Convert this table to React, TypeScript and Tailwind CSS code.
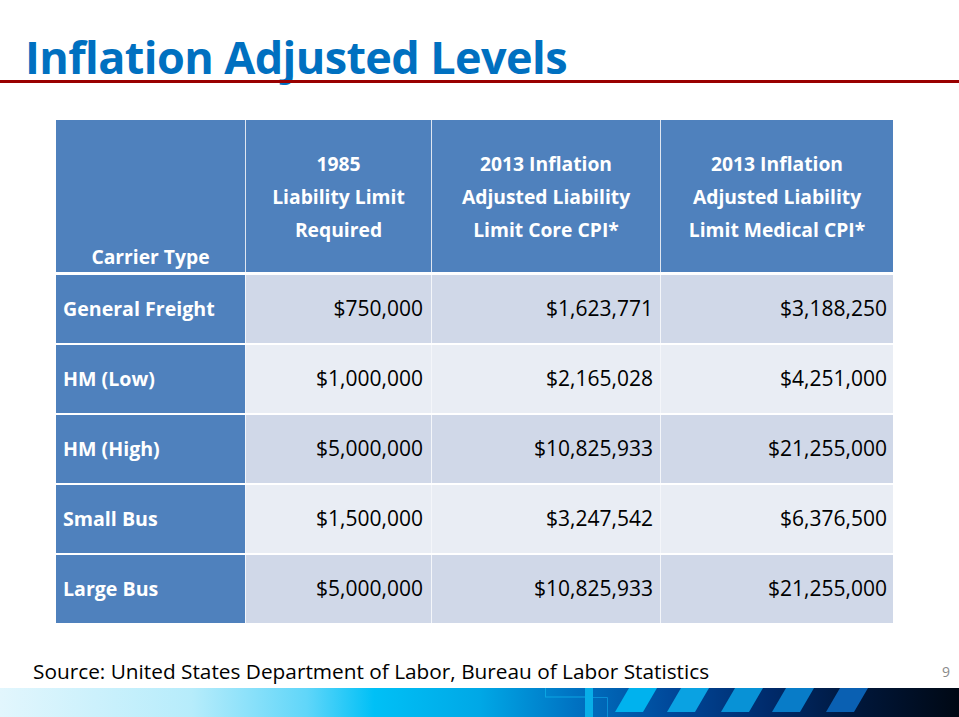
const rows = [
  { type: "General Freight", y1985: "$750,000", core: "$1,623,771", medical: "$3,188,250" },
  { type: "HM (Low)", y1985: "$1,000,000", core: "$2,165,028", medical: "$4,251,000" },
  { type: "HM (High)", y1985: "$5,000,000", core: "$10,825,933", medical: "$21,255,000" },
  { type: "Small Bus", y1985: "$1,500,000", core: "$3,247,542", medical: "$6,376,500" },
  { type: "Large Bus", y1985: "$5,000,000", core: "$10,825,933", medical: "$21,255,000" },
];

// slanted stripes on the footer band: bottom-left x of each
const stripes = [
  { x: 615, fill: "#00b2ee" },
  { x: 667, fill: "#0aa2e2" },
  { x: 721, fill: "#0892d6" },
  { x: 772, fill: "#087cc8" },
  { x: 826, fill: "#0a60b2" },
];

function FooterBand() {
  return (
    <div className="relative h-[29px] w-full bg-[linear-gradient(90deg,#e2f6fd_0%,#b6ecfb_20%,#60d6f9_32%,#00c0f6_39%,#00a8e6_50%,#0072c2_60%,#00489a_70%,#002b6c_80%,#001638_90%,#000814_100%)]">
      <svg className="absolute inset-0" width="959" height="29" viewBox="0 0 959 29">
        <rect x="545.5" y="-1" width="40" height="10" fill="none" stroke="#0aa6e2" strokeWidth="1" />
        <rect x="585" y="0" width="8" height="29" fill="#08aee8" />
        <polyline points="593,9.5 607.5,9.5 607.5,29" fill="none" stroke="#0a8fd6" strokeWidth="1" />
        {stripes.map((s) => (
          <polygon
            key={s.x}
            points={`${s.x},24 ${s.x + 28},24 ${s.x + 42},0 ${s.x + 14},0`}
            fill={s.fill}
          />
        ))}
      </svg>
    </div>
  );
}

export default function App() {
  return (
    <div
      className="w-[959px] h-[717px] bg-white flex flex-col overflow-hidden"
      style={{ fontFamily: '"Open Sans", "Noto Sans", sans-serif' }}
    >
      <h1 className="mt-[34px] pl-[25px] text-[45px] leading-[46px] font-bold text-[#0070c0] tracking-[-0.6px] whitespace-nowrap">
        Inflation Adjusted Levels
      </h1>
      <div className="h-[3px] w-full bg-[#990000]" />

      <div className="mt-[37px] ml-[56px] w-[837px]">
        <div className="grid grid-cols-[189px_185px_228px_232px] gap-x-[1px] bg-[#dfe6f1] h-[152px] text-white font-bold text-[19.3px]">
          <div className="bg-[#4f81bd] flex items-end justify-center pb-[2px] leading-[26px]">
            Carrier Type
          </div>
          <div className="bg-[#4f81bd] flex items-center justify-center text-center leading-[33px]">
            <span>
              1985
              <br />
              Liability Limit
              <br />
              Required
            </span>
          </div>
          <div className="bg-[#4f81bd] flex items-center justify-center text-center leading-[33px]">
            <span>
              2013 Inflation
              <br />
              Adjusted Liability
              <br />
              Limit Core CPI*
            </span>
          </div>
          <div className="bg-[#4f81bd] flex items-center justify-center text-center leading-[33px]">
            <span>
              2013 Inflation
              <br />
              Adjusted Liability
              <br />
              Limit Medical CPI*
            </span>
          </div>
        </div>

        <div className="mt-[3px] flex flex-col gap-y-[2px]">
          {rows.map((r, i) => {
            const cell = i % 2 === 0 ? "bg-[#d0d8e8]" : "bg-[#e9edf4]";
            return (
              <div
                key={r.type}
                className="grid grid-cols-[189px_185px_228px_232px] gap-x-[1px] bg-[#f4f6fa] h-[68px] text-[21px]"
              >
                <div className="bg-[#4f81bd] text-white font-bold text-[19.6px] flex items-center pl-[7px]">
                  {r.type}
                </div>
                <div className={`${cell} text-black flex items-center justify-end pr-[8px]`}>
                  {r.y1985}
                </div>
                <div className={`${cell} text-black flex items-center justify-end pr-[7px]`}>
                  {r.core}
                </div>
                <div className={`${cell} text-black flex items-center justify-end pr-[6px]`}>
                  {r.medical}
                </div>
              </div>
            );
          })}
        </div>
      </div>

      <div className="mt-[36px] h-[24px] flex items-center justify-between pl-[33px] pr-[9px]">
        <span className="text-[20.8px] leading-[24px] text-black">
          Source: United States Department of Labor, Bureau of Labor Statistics
        </span>
        <span className="text-[14px] text-[#8a8a8a]">9</span>
      </div>

      <div className="mt-auto">
        <FooterBand />
      </div>
    </div>
  );
}
